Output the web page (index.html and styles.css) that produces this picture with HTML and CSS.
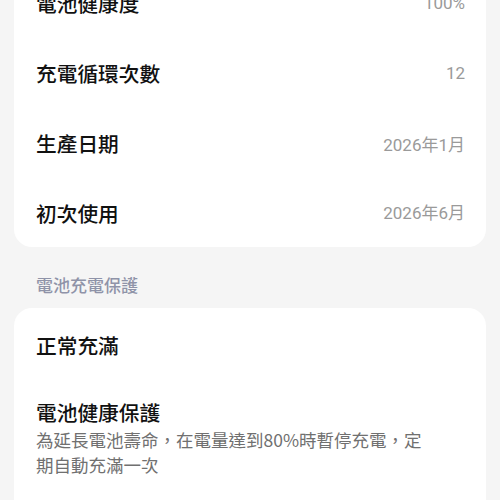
FILE: index.html
```html
<!DOCTYPE html>
<html lang="zh-Hant">
<head>
<meta charset="utf-8">
<link rel="stylesheet" href="styles.css">
</head>
<body>
<div class="page">
  <section class="card card-info">
    <div class="row"><span class="label">電池健康度</span><span class="value">100%</span></div>
    <div class="row"><span class="label">充電循環次數</span><span class="value">12</span></div>
    <div class="row"><span class="label">生產日期</span><span class="value">2026年1月</span></div>
    <div class="row"><span class="label">初次使用</span><span class="value">2026年6月</span></div>
  </section>
  <h2 class="section-title">電池充電保護</h2>
  <section class="card card-options">
    <div class="option"><div class="label">正常充滿</div></div>
    <div class="option">
      <div class="label">電池健康保護</div>
      <div class="desc">為延長電池壽命，在電量達到80%時暫停充電，定期自動充滿一次</div>
    </div>
  </section>
</div>
</body>
</html>
```

FILE: styles.css
```css
html, body {
  margin: 0;
  padding: 0;
  background: #f5f5f5;
}
body {
  font-family: "Noto Sans CJK TC", "Noto Sans", Roboto, sans-serif;
  color: #111;
  overflow: hidden;
  height: 500px;
}
.page {
  padding: 0 14px;
  margin-top: -38px;
}
.card {
  background: #fff;
  border-radius: 18px;
}
.card-info {
  padding: 6px 21px 0 22px;
}
.row {
  height: 70px;
  display: flex;
  align-items: center;
  justify-content: space-between;
}
.card-info .row:last-child {
  height: 69px;
  align-items: flex-start;
  padding-top: 21px;
  box-sizing: border-box;
}
.label {
  font-size: 20.7px;
  line-height: 28px;
  font-weight: 500;
  color: #111;
}
.value {
  font-family: Roboto, "Noto Sans CJK TC", sans-serif;
  font-size: 17px;
  color: #9a9a9a;
}
.section-title {
  margin: 0;
  padding: 26px 22px 11px;
  font-size: 17px;
  line-height: 24px;
  font-weight: 500;
  color: #8f93a8;
}
.card-options {
  padding: 23px 22px 60px;
}
.option + .option {
  margin-top: 39px;
}
.desc {
  margin-top: 1px;
  font-size: 17.5px;
  line-height: 25px;
  color: #707070;
  max-width: 392px;
}
```
